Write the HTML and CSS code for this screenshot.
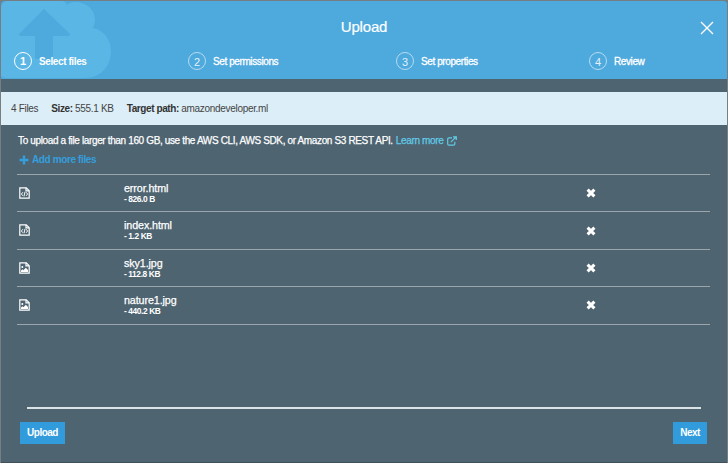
FILE: index.html
```html
<!DOCTYPE html>
<html lang="en">
<head>
<meta charset="utf-8">
<title>Upload</title>
<link rel="stylesheet" href="styles.css">
</head>
<body>
<svg width="0" height="0" class="sprites" aria-hidden="true">
  <symbol id="code" viewBox="0 0 11 12"><path d="M.8.8h6.5l2.9 2.9v7.5H.8zM7 .8v3.1h3.2" fill="none" stroke="currentColor" stroke-width="1.2"/><path d="M3.9 5.2 2.4 7l1.5 1.8M7.1 5.2 8.6 7 7.1 8.8M6 4.8 5 9.3" fill="none" stroke="currentColor" stroke-width=".95"/></symbol>
  <symbol id="image" viewBox="0 0 11 12"><path d="M.8.8h6.5l2.9 2.9v7.5H.8zM7 .8v3.1h3.2" fill="none" stroke="currentColor" stroke-width="1.2"/><path d="M2 10V8.6l1.4-1.3 1 .9 2.4-2.5L9 7.9V10z" fill="currentColor"/><circle cx="3.3" cy="4.9" r="1" fill="currentColor"/></symbol>
  <symbol id="remove" viewBox="0 0 10 10"><path d="m1.6 1.6 6.8 6.8M8.4 1.6 1.6 8.4" fill="none" stroke="currentColor" stroke-width="3"/></symbol>
</svg>
<div class="dialog">
  <header class="header">
    <svg class="cloud" width="112" height="78" viewBox="0 0 112 78" aria-hidden="true"><path fill="#59b6e5" d="M5 0H62Q65 1 66 4Q69 1 74 1C86 1 94 9 94 19Q94 23 92 27C103 29 110 39 110 50C110 66 99 77 84 77H6Q2 77 0 75V6Q1 2 5 0Z"/><path fill="#4ea9dd" d="M43 8 69 33Q69 35 67 35H52V56Q52 58 50 58H36Q34 58 34 56V35H20Q18 35 18 33Z"/></svg>
    <h1 class="title">Upload</h1>
    <svg class="close" width="14" height="14" viewBox="0 0 14 14"><path d="m1 1 12 12M13 1 1 13" stroke="#fff" stroke-width="1.4"/></svg>
    <ol class="steps">
      <li class="step step-files active"><span class="num">1</span><span class="label">Select files</span></li>
      <li class="step step-permissions"><span class="num">2</span><span class="label">Set permissions</span></li>
      <li class="step step-properties"><span class="num">3</span><span class="label">Set properties</span></li>
      <li class="step step-review"><span class="num">4</span><span class="label">Review</span></li>
    </ol>
  </header>
  <div class="summary"><span class="count">4 Files</span><span class="size"><b>Size:</b> 555.1 KB</span><span class="target"><b>Target path:</b> amazondeveloper.ml</span></div>
  <main class="content">
    <p class="hint"><span class="hint-text">To upload a file larger than 160 GB, use the AWS CLI, AWS SDK, or Amazon S3 REST API.</span><a class="learn">Learn more</a><svg class="external" width="10" height="10" viewBox="0 0 10 10"><path d="M5 1.8H1.9Q.7 1.8.7 3v5Q.7 9.2 1.9 9.2h4.7Q7.8 9.2 7.8 8V5.8M3.8 6.2 8.8 1.2M6 .8h3.3V4" fill="none" stroke="currentColor" stroke-width="1.2"/></svg></p>
    <a class="add"><svg width="10" height="10" viewBox="0 0 10 10"><path d="M5 .5v9M.5 5h9" stroke="currentColor" stroke-width="2.4"/></svg><span>Add more files</span></a>
    <ul class="files">
      <li class="file"><svg class="type" width="11" height="12"><use href="#code"/></svg><div class="info"><span class="name">error.html</span><span class="bytes">- 826.0 B</span></div><svg class="remove" width="10" height="10"><use href="#remove"/></svg></li>
      <li class="file"><svg class="type" width="11" height="12"><use href="#code"/></svg><div class="info"><span class="name">index.html</span><span class="bytes">- 1.2 KB</span></div><svg class="remove" width="10" height="10"><use href="#remove"/></svg></li>
      <li class="file"><svg class="type" width="11" height="12"><use href="#image"/></svg><div class="info"><span class="name">sky1.jpg</span><span class="bytes">- 112.8 KB</span></div><svg class="remove" width="10" height="10"><use href="#remove"/></svg></li>
      <li class="file"><svg class="type" width="11" height="12"><use href="#image"/></svg><div class="info"><span class="name">nature1.jpg</span><span class="bytes">- 440.2 KB</span></div><svg class="remove" width="10" height="10"><use href="#remove"/></svg></li>
    </ul>
  </main>
  <footer class="footer"><button class="button">Upload</button><button class="button next">Next</button></footer>
</div>
</body>
</html>
```

FILE: styles.css
```css
* { box-sizing: border-box; }
body { margin: 0; width: 728px; height: 463px; overflow: hidden; background: #777e82; padding: 1px 1px 0; font: 10px/12px "Liberation Sans", Arial, sans-serif; color: #fff; }
.sprites { position: absolute; }
h1, p, ol, ul { margin: 0; padding: 0; }
ol, ul { list-style: none; }
.dialog { height: 462px; border-radius: 3px 3px 0 0; overflow: hidden; background: #4e6471; border-bottom: 1px solid #3e505c; display: flex; flex-direction: column; }
.header { position: relative; height: 78px; background: #4ea9dd; }
.cloud { position: absolute; left: 0; top: 0; }
.title { padding: 17px 0 0; text-align: center; font-size: 15px; line-height: 18px; font-weight: 400; letter-spacing: -.2px; -webkit-text-stroke: .2px; }
.close { position: absolute; right: 13px; top: 20px; }
.steps { position: relative; display: flex; padding: 16px 0 0 13px; }
.step { display: flex; align-items: center; gap: 7px; height: 18px; }
.step-files { width: 174px; }
.step-permissions { width: 208px; }
.step-properties { width: 193px; }
.num { width: 18px; height: 18px; border: 1px solid #b5dcf2; border-radius: 50%; text-align: center; font-size: 11px; line-height: 18px; color: #e2f1fa; }
.active .num { border: 1.5px solid #fff; font-weight: 700; color: #fff; line-height: 17px; }
.label { padding-top: 1px; -webkit-text-stroke: .3px; letter-spacing: -.4px; }
.active .label { font-weight: 700; letter-spacing: -.4px; -webkit-text-stroke: 0; }
.summary { height: 33px; margin-top: 13px; padding-left: 10px; display: flex; align-items: center; gap: 13px; background: #dceef7; color: #444; letter-spacing: -.31px; }
.summary b { color: #333; letter-spacing: -.41px; }
.content { padding: 10px 17px 0 16px; }
.hint { display: flex; padding-left: 1px; height: 12px; white-space: nowrap; }
.hint-text { -webkit-text-stroke: .25px; letter-spacing: -.36px; margin-right: 3px; }
.learn { color: #62cbe8; -webkit-text-stroke: .25px; margin-right: 4px; letter-spacing: -.35px; }
.external { color: #62cbe8; margin-top: 1px; }
.add { display: flex; align-items: center; gap: 3px; margin: 7px 0 8px 2px; color: #359fdd; font-weight: 700; height: 12px; letter-spacing: -.38px; }
.files { border-top: 1px solid #9aa6ac; }
.file { height: 37.4px; border-bottom: 1px solid #9aa6ac; display: grid; grid-template-columns: 107px 461px 10px; padding-top: 7px; }
.type { margin: 5px 0 0 1.5px; }
.info { display: flex; flex-direction: column; }
.name { font-size: 10.7px; line-height: 12px; letter-spacing: -.08px; -webkit-text-stroke: .25px; }
.bytes { font-size: 8.4px; line-height: 11px; font-weight: 700; letter-spacing: -.4px; }
.remove { margin: 6.3px 0 0 1px; }
.footer { margin: auto 20px 18px 19px; display: flex; justify-content: space-between; position: relative; padding-top: 15px; }
.footer::before { content: ""; position: absolute; left: 7px; right: 6px; top: 0; height: 2px; background: #dce3e6; }
.button { width: 45px; height: 22px; border: 0; padding: 0; background: #319bdb; color: #fff; font: 700 10px/22px "Liberation Sans", Arial, sans-serif; letter-spacing: -.5px; }
.next { width: 34px; }
```
